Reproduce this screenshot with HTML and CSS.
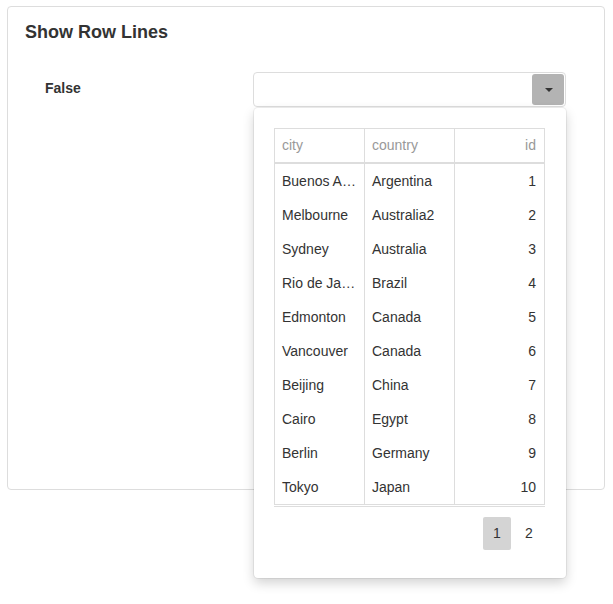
FILE: index.html
```html
<!DOCTYPE html>
<html>
<head>
<meta charset="utf-8">
<link rel="stylesheet" href="styles.css">
</head>
<body>
<div class="card">
  <h2 class="title">Show Row Lines</h2>
  <div class="field-row">
    <div class="label">False</div>
    <div class="combo">
      <div class="combo-input"></div>
      <div class="combo-btn"><span class="caret"></span></div>
      <div class="popup">
        <div class="grid">
          <table class="tbl">
            <thead>
              <tr><th class="c-city">city</th><th class="c-country">country</th><th class="c-id num">id</th></tr>
            </thead>
            <tbody>
              <tr><td>Buenos A…</td><td>Argentina</td><td class="num">1</td></tr>
              <tr><td>Melbourne</td><td>Australia2</td><td class="num">2</td></tr>
              <tr><td>Sydney</td><td>Australia</td><td class="num">3</td></tr>
              <tr><td>Rio de Ja…</td><td>Brazil</td><td class="num">4</td></tr>
              <tr><td>Edmonton</td><td>Canada</td><td class="num">5</td></tr>
              <tr><td>Vancouver</td><td>Canada</td><td class="num">6</td></tr>
              <tr><td>Beijing</td><td>China</td><td class="num">7</td></tr>
              <tr><td>Cairo</td><td>Egypt</td><td class="num">8</td></tr>
              <tr><td>Berlin</td><td>Germany</td><td class="num">9</td></tr>
              <tr><td>Tokyo</td><td>Japan</td><td class="num">10</td></tr>
            </tbody>
          </table>
        </div>
        <div class="grid-foot"></div>
        <div class="pager">
          <span class="page active">1</span>
          <span class="page">2</span>
        </div>
      </div>
    </div>
  </div>
</div>
</body>
</html>
```
FILE: styles.css
```css
html, body {
  margin: 0;
  padding: 0;
  background: #fff;
}
body {
  font-family: "Liberation Sans", Arial, sans-serif;
  color: #333;
  padding: 6px 0 0 7px;
  min-height: 604px;
  box-sizing: border-box;
}
.card {
  box-sizing: border-box;
  width: 598px;
  height: 484px;
  border: 1px solid #ddd;
  border-radius: 4px;
  padding: 14px 17px;
}
.title {
  margin: 0;
  font-size: 18px;
  line-height: 22px;
  font-weight: bold;
  color: #333;
}
.field-row {
  display: flex;
  margin-top: 29px;
}
.label {
  flex: 0 0 228px;
  padding-left: 20px;
  box-sizing: border-box;
  font-size: 14px;
  font-weight: bold;
  line-height: 32px;
  color: #333;
}
.combo {
  position: relative;
  z-index: 2;
  box-sizing: border-box;
  flex: 0 0 313px;
  height: 35px;
  border: 1px solid #ddd;
  border-radius: 4px;
  display: flex;
  justify-content: flex-end;
  padding: 1px;
}
.combo-input {
  flex: 1;
}
.combo-btn {
  width: 32px;
  height: 31px;
  background: #b3b3b3;
  border-radius: 3px;
  display: flex;
  align-items: center;
  justify-content: center;
  padding-left: 1px;
  box-sizing: border-box;
}
.caret {
  width: 0;
  height: 0;
  border-left: 4px solid transparent;
  border-right: 4px solid transparent;
  border-top: 4px solid #333;
}
.popup {
  position: absolute;
  left: 0;
  top: 35px;
  box-sizing: border-box;
  width: 312px;
  height: 470px;
  background: #fff;
  border-radius: 4px;
  box-shadow: 0 0 0 1px rgba(0, 0, 0, 0.06), 0 5px 12px rgba(0, 0, 0, 0.18);
  padding: 20px;
}
.grid {
  border: 1px solid #ddd;
  width: 271px;
  box-sizing: border-box;
}
.tbl {
  border-collapse: separate;
  border-spacing: 0;
  width: 100%;
  table-layout: fixed;
  font-size: 14px;
}
.tbl th, .tbl td {
  height: 34px;
  padding: 0 8px 0 7px;
  text-align: left;
  border-left: 1px solid #ddd;
  white-space: nowrap;
  overflow: hidden;
  box-sizing: border-box;
}
.tbl th:first-child, .tbl td:first-child {
  border-left: 0;
}
.tbl th {
  font-weight: normal;
  color: #999;
  border-bottom: 2px solid #ddd;
  height: 35px;
  padding-bottom: 1px;
}
.tbl td {
  color: #333;
}
.c-city { width: 89px; }
.c-country { width: 90px; }
.tbl .num { text-align: right; }
.grid-foot {
  width: 271px;
  margin-top: 1px;
  border-top: 1px solid #ddd;
}
.pager {
  display: flex;
  justify-content: flex-end;
  gap: 4px;
  margin-top: 10px;
  width: 269px;
}
.page {
  width: 28px;
  height: 33px;
  line-height: 33px;
  text-align: center;
  font-size: 14px;
  color: #333;
  border-radius: 2px;
}
.page.active {
  background: #d4d4d4;
}
```
